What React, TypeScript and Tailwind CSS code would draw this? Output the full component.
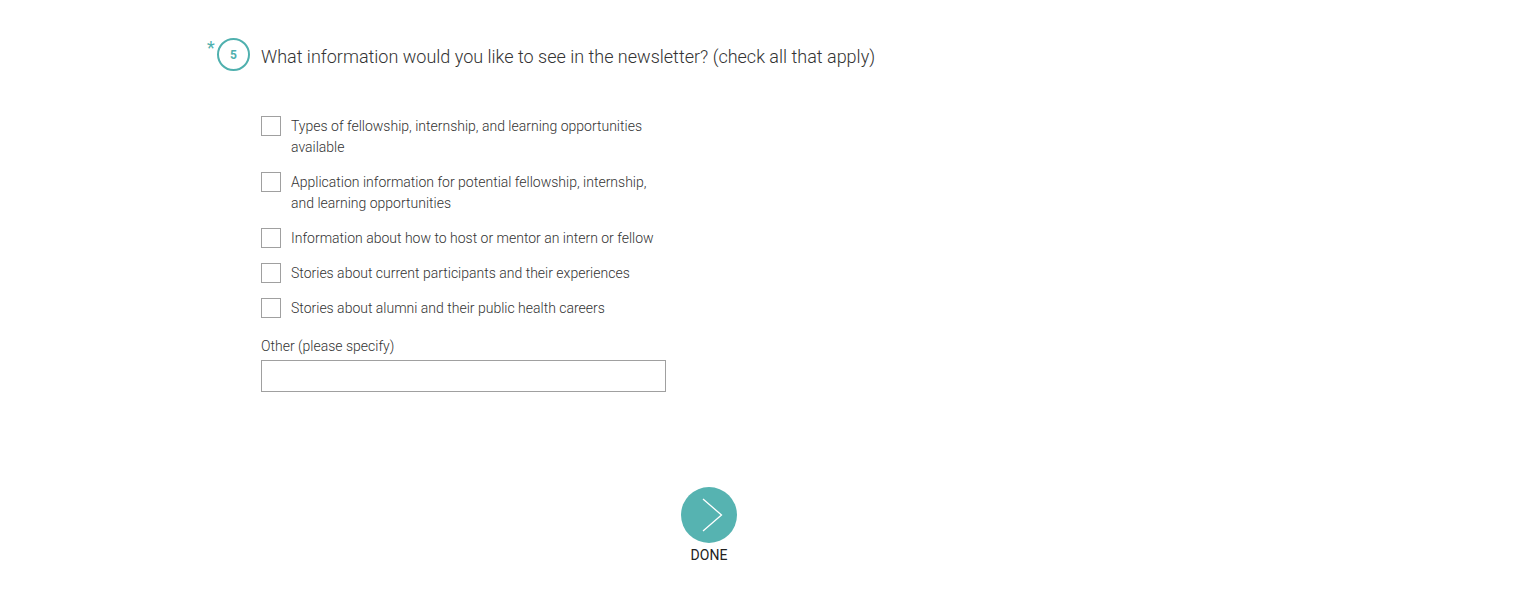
const options = [
  'Types of fellowship, internship, and learning opportunities available',
  'Application information for potential fellowship, internship, and learning opportunities',
  'Information about how to host or mentor an intern or fellow',
  'Stories about current participants and their experiences',
  'Stories about alumni and their public health careers',
]

export default function App() {
  return (
    <div className="min-h-[609px] bg-white text-[#333] font-['Roboto',sans-serif]">
      <div className="pl-[207px] pt-[38px]">
        {/* Question header */}
        <div className="flex items-start">
          <span className="text-[#4fb0ae] text-[18px] leading-none w-[10px] mt-[1px]">*</span>
          <div className="w-[33px] h-[33px] rounded-full border-2 border-[#4fb0ae] flex items-center justify-center text-[#4fb0ae] text-[12px] font-bold">
            5
          </div>
          <h2 className="ml-[11px] mt-[7px] text-[18px] leading-[24px] font-light text-[#333]">
            What information would you like to see in the newsletter? (check all that apply)
          </h2>
        </div>

        {/* Options */}
        <div className="ml-[54px] mt-[45px] w-[405px]">
          <div className="flex flex-col gap-[14px]">
            {options.map(opt => (
              <label key={opt} className="flex items-start gap-[10px] cursor-pointer">
                <input type="checkbox" className="peer sr-only" />
                <span className="w-[20px] h-[20px] shrink-0 border border-[#a0a0a0] bg-white"></span>
                <span className="text-[14px] leading-[21px] font-light text-[#333] w-[370px]">{opt}</span>
              </label>
            ))}
          </div>

          <div className="mt-[17px] text-[14px] leading-[21px] font-light text-[#333]">Other (please specify)</div>
          <input
            type="text"
            className="mt-[3px] w-[405px] h-[32px] border border-[#a0a0a0] outline-none px-2 text-[14px] font-light"
          />
        </div>
      </div>

      {/* Done */}
      <div className="w-[1418px] flex flex-col items-center mt-[95px]">
        <button className="w-[56px] h-[56px] rounded-full bg-[#56b3b1] flex items-center justify-center">
          <svg width="56" height="56" viewBox="0 0 56 56" fill="none">
            <path d="M22 12 L40.5 28 L22 44" stroke="white" strokeWidth="1.3" />
          </svg>
        </button>
        <span className="mt-[2px] text-[14px] leading-[21px] text-[#222]">DONE</span>
      </div>
    </div>
  )
}
